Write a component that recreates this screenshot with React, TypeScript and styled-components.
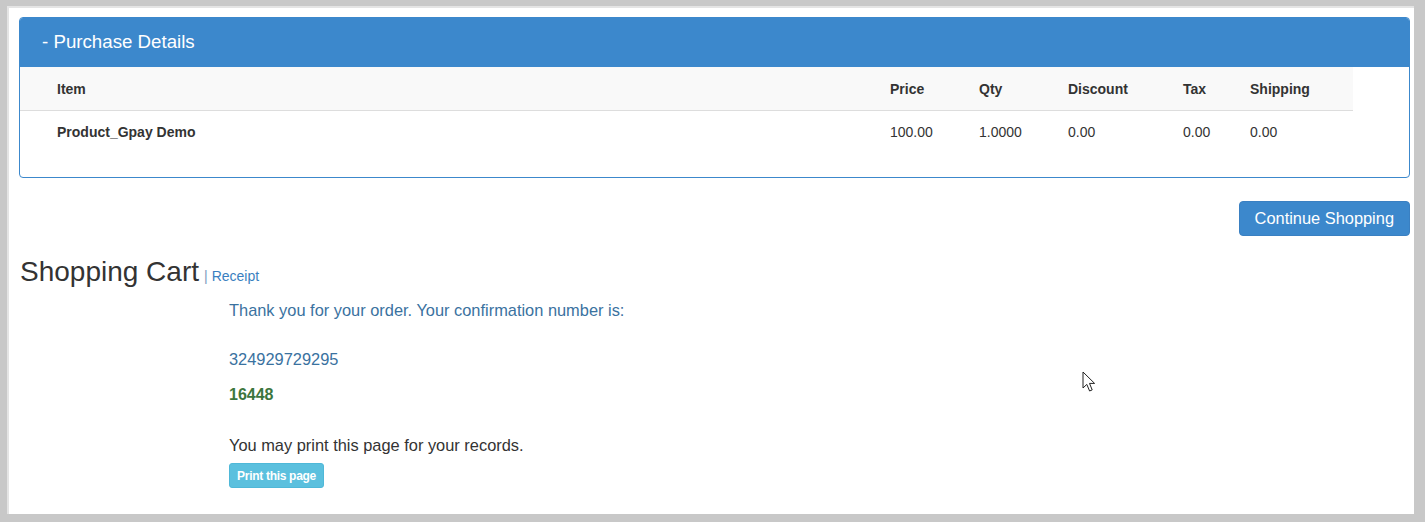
import React from 'react';
import styled, { createGlobalStyle } from 'styled-components';

const GlobalStyle = createGlobalStyle`
  html, body {
    margin: 0;
    padding: 0;
    background: #c8c8c8;
    font-family: "Liberation Sans", Arial, sans-serif;
  }
`;

const columns = [
  { key: 'item', label: 'Item', width: 862 },
  { key: 'price', label: 'Price', width: 89 },
  { key: 'qty', label: 'Qty', width: 89 },
  { key: 'discount', label: 'Discount', width: 115 },
  { key: 'tax', label: 'Tax', width: 67 },
  { key: 'shipping', label: 'Shipping', width: 111 },
];

const rows = [
  {
    item: 'Product_Gpay Demo',
    price: '100.00',
    qty: '1.0000',
    discount: '0.00',
    tax: '0.00',
    shipping: '0.00',
  },
];

const App: React.FC = () => {
  return (
    <>
      <GlobalStyle />
      <Frame>
        <Panel>
          <PanelHeading>- Purchase Details</PanelHeading>
          <PanelBody>
            <Table>
              <colgroup>
                {columns.map((c) => (
                  <col key={c.key} style={{ width: c.width }} />
                ))}
              </colgroup>
              <thead>
                <tr>
                  {columns.map((c, idx) => (
                    <HeadCell key={c.key} first={idx === 0}>{c.label}</HeadCell>
                  ))}
                </tr>
              </thead>
              <tbody>
                {rows.map((row, rIdx) => (
                  <tr key={`row-${rIdx}`}>
                    {columns.map((c, idx) => (
                      <BodyCell key={c.key} first={idx === 0}>
                        {(row as any)[c.key]}
                      </BodyCell>
                    ))}
                  </tr>
                ))}
              </tbody>
            </Table>
          </PanelBody>
        </Panel>

        <ButtonRow>
          <PrimaryButton>Continue Shopping</PrimaryButton>
        </ButtonRow>

        <CartTitle>
          Shopping Cart
          <Divider>|</Divider>
          <ReceiptLink>Receipt</ReceiptLink>
        </CartTitle>

        <Receipt>
          <InfoText>Thank you for your order. Your confirmation number is:</InfoText>
          <ConfirmNumber>324929729295</ConfirmNumber>
          <SuccessText>16448</SuccessText>
          <PlainText>You may print this page for your records.</PlainText>
          <PrintButton>Print this page</PrintButton>
        </Receipt>

        <Cursor width="14" height="22" viewBox="0 0 14 22">
          <path
            d="M1 1 L1 17 L4.8 13.4 L7.6 20 L10.2 18.9 L7.5 12.4 L12.6 12.4 Z"
            fill="#fff"
            stroke="#222"
            strokeWidth="1"
            strokeLinejoin="round"
          />
        </Cursor>
      </Frame>
    </>
  );
};

export default App;

const Frame = styled.div`
  position: relative;
  box-sizing: border-box;
  margin: 6px 11px 0 7px;
  height: 508px;
  background: #fff;
  border-top: 2px solid #e4e4e4;
  border-left: 2px solid #e4e4e4;
  padding: 9px 4px 0 10px;
`;

const Panel = styled.div`
  border: 1px solid #3c88cc;
  border-radius: 4px;
  overflow: hidden;
  background: #fff;
`;

const PanelHeading = styled.div`
  height: 49px;
  background: #3c88cc;
  color: #fff;
  font-size: 18.7px;
  line-height: 47px;
  padding-left: 22px;
`;

const PanelBody = styled.div`
  padding-bottom: 25px;
`;

const Table = styled.table`
  border-collapse: collapse;
  table-layout: fixed;
  width: 1333px;
  font-size: 14px;
  color: #333;
`;

const HeadCell = styled.th<{ first?: boolean }>`
  height: 43px;
  padding: 0 0 0 ${(p) => (p.first ? '37px' : '8px')};
  text-align: left;
  font-weight: bold;
  background: #f9f9f9;
  border-bottom: 1px solid #dddddd;
`;

const BodyCell = styled.td<{ first?: boolean }>`
  height: 41px;
  padding: 0 0 0 ${(p) => (p.first ? '37px' : '8px')};
  font-weight: ${(p) => (p.first ? 'bold' : 'normal')};
`;

const ButtonRow = styled.div`
  display: flex;
  justify-content: flex-end;
  margin-top: 23px;
`;

const PrimaryButton = styled.button`
  height: 35px;
  padding: 0 15px;
  border: 1px solid #3a80c2;
  border-radius: 4px;
  background: #3c88cc;
  color: #fff;
  font-family: "Liberation Sans", Arial, sans-serif;
  font-size: 16.4px;
`;

const CartTitle = styled.h1`
  margin: 20px 0 0 1px;
  font-size: 28px;
  font-weight: normal;
  line-height: 32px;
  color: #333;
`;

const Divider = styled.span`
  margin-left: 5px;
  font-size: 14px;
  color: #7a9cc0;
`;

const ReceiptLink = styled.a`
  margin-left: 4px;
  font-size: 14px;
  color: #3a7fc0;
`;

const Receipt = styled.div`
  display: flex;
  flex-direction: column;
  align-items: flex-start;
  padding-left: 210px;
`;

const InfoText = styled.div`
  margin-top: 7px;
  font-size: 16.4px;
  line-height: 22px;
  color: #3a729f;
`;

const ConfirmNumber = styled(InfoText)`
  margin-top: 27px;
`;

const SuccessText = styled.div`
  margin-top: 15px;
  font-size: 16px;
  font-weight: bold;
  line-height: 20px;
  color: #3c763d;
`;

const PlainText = styled.div`
  margin-top: 29px;
  font-size: 16.4px;
  line-height: 22px;
  color: #333;
`;

const PrintButton = styled.button`
  margin-top: 7px;
  width: 95px;
  height: 25px;
  padding: 0;
  border: 1px solid #4fb8d8;
  border-radius: 3px;
  background: #5bc0de;
  color: #fff;
  font-family: "Liberation Sans", Arial, sans-serif;
  font-size: 12px;
  font-weight: bold;
  letter-spacing: -0.3px;
`;

const Cursor = styled.svg`
  position: absolute;
  left: 1073px;
  top: 363px;
`;
